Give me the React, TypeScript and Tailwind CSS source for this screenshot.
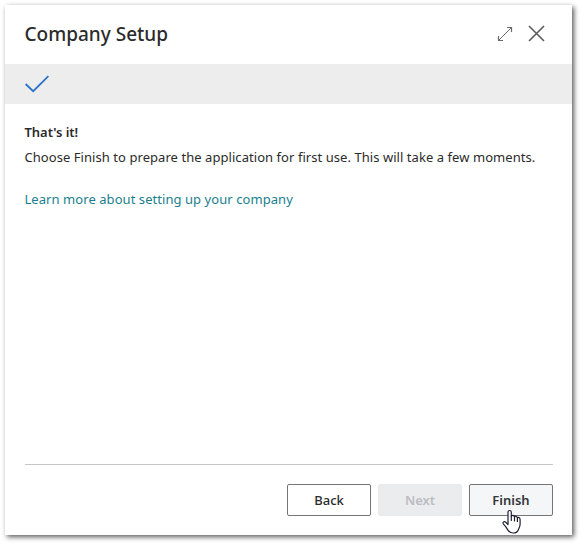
const buttonBase =
  "flex h-8 w-[84px] items-center justify-center rounded-[2px] text-[13px] leading-[18px]";

function ExpandIcon() {
  return (
    <svg width="16" height="16" viewBox="0 0 16 16" fill="none" stroke="#6b6b6b" strokeWidth="1">
      <path d="M1.3 14.7 14.7 1.3" />
      <path d="M10 1.5h4.5v4.5M6 14.5h-4.5v-4.5" strokeWidth="1.2" />
    </svg>
  );
}

function CloseIcon() {
  return (
    <svg width="17" height="17" viewBox="0 0 17 17" fill="none" stroke="#5c5c5c" strokeWidth="1.6">
      <path d="M1 1l15 15M16 1 1 16" />
    </svg>
  );
}

function HandCursor() {
  return (
    <svg
      className="absolute left-[31.5px] top-[23.5px]"
      width="20"
      height="26"
      viewBox="0 0 20 26"
      fill="#fff"
      stroke="#1f1f33"
      strokeWidth="1.2"
      strokeLinejoin="round"
      strokeLinecap="round"
    >
      <path d="M6 15.5V3.2C6 .9 9.3.9 9.3 3.2V7.6C9.6 5.9 12.2 6 12.5 7.9C13 6.7 15.1 7 15.4 8.9C16.2 8 18.1 8.5 18.1 10.4V15C18.1 17.6 17.3 18.6 16.6 20.2C15.7 22.9 13.8 24 11.3 24C8.5 24 6.8 22.8 5.6 20.6C4.3 18.2 3 16.8 1.5 15.2C.2 13.6 1.8 11.9 3.5 13Z" />
      <path d="M9.3 7.6V11.5M12.5 8V12M15.4 9V12.5" />
    </svg>
  );
}

export default function App() {
  return (
    <div className="h-[544px] w-[581px] overflow-hidden bg-white p-[5px] font-['Noto_Sans','Open_Sans',sans-serif] text-[#2b2b2b]">
      <section className="flex h-[530px] w-[567px] flex-col bg-white shadow-[2px_2px_5px_0px_rgba(0,0,0,0.65)]">
        <header className="flex h-[59px] shrink-0 items-center pl-[19.5px] pr-[27px] pb-[2px]">
          <h1 className="grow whitespace-nowrap text-[19px] font-medium leading-[26px]">
            <span>Company Setup</span>
          </h1>
          <div className="flex items-center gap-[15px]">
            <ExpandIcon />
            <CloseIcon />
          </div>
        </header>
        <div className="flex h-10 shrink-0 items-center bg-[#ededed] pl-5">
          <svg width="24" height="18" viewBox="0 0 24 18" fill="none" stroke="#2b74c9" strokeWidth="1.8">
            <path d="M.6 9 8.2 16.2 23.4 1.2" />
          </svg>
        </div>
        <main className="flex grow flex-col items-start pl-[19.5px] pr-4 pt-[18px] text-[13px] leading-5">
          <h2 className="font-semibold tracking-[-0.05px]">
            <span>That's it!</span>
          </h2>
          <p className="mt-[5px] whitespace-nowrap tracking-[0.055px]">
            <span>Choose Finish to prepare the application for first use. This will take a few moments.</span>
          </p>
          <a className="mt-[22px] whitespace-nowrap tracking-[0.06px] text-[#1a7f8e]">
            Learn more about setting up your company
          </a>
        </main>
        <footer className="ml-5 mr-[19px] flex h-[71px] shrink-0 justify-end gap-[7px] border-t border-[#c6c6c6] pt-[19px]">
          <button className={`${buttonBase} border border-[#757575] bg-white font-medium`}>Back</button>
          <button className={`${buttonBase} bg-[#ebecee] font-semibold text-[#bbbdc3]`}>Next</button>
          <button className={`${buttonBase} relative border border-[#757575] bg-[#f5f6f8] font-semibold text-[#33373a]`}>
            Finish
            <HandCursor />
          </button>
        </footer>
      </section>
    </div>
  );
}
